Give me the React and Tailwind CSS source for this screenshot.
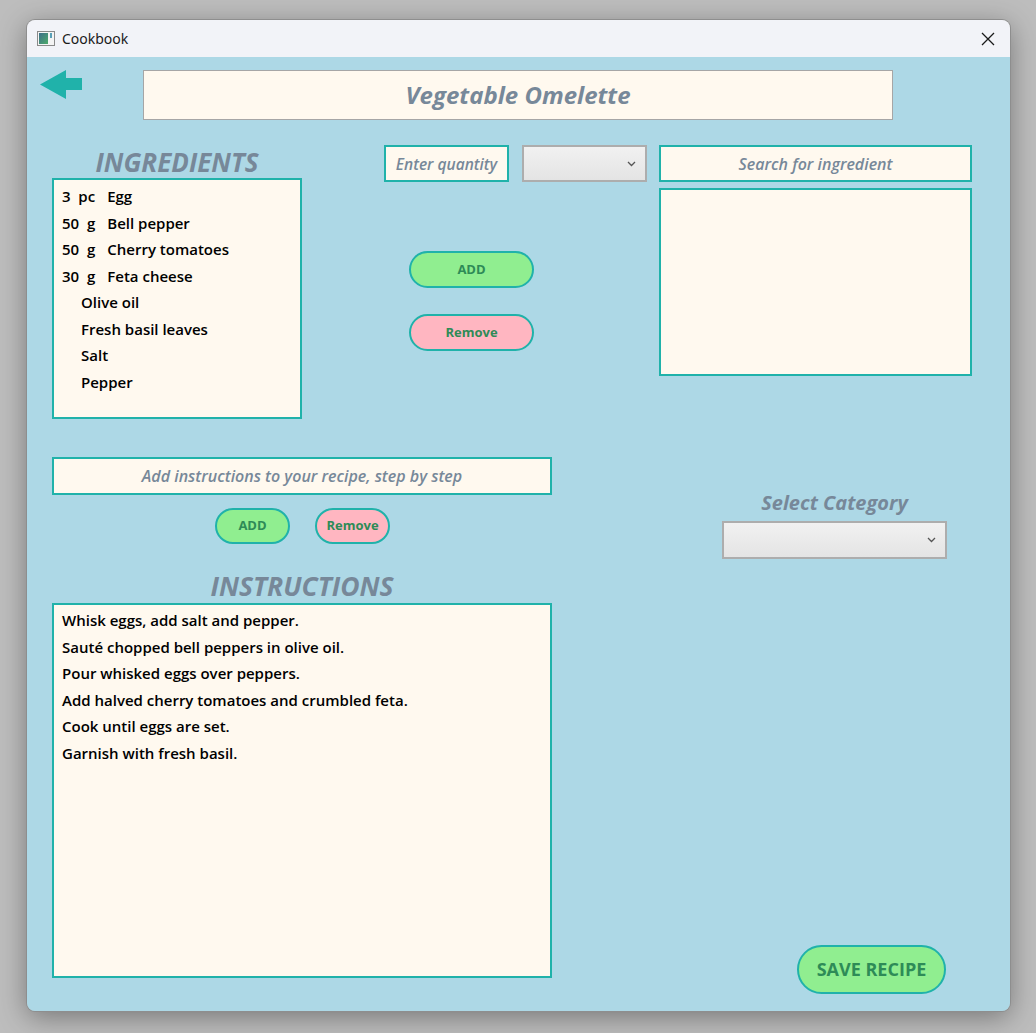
import React from "react";

const F = { fontFamily: '"Open Sans", "Noto Sans", sans-serif' };

function Combo({ className }) {
  return (
    <div
      className={`flex items-center justify-end border-2 border-[#adadad] bg-gradient-to-b from-[#f1f1f1] to-[#e4e4e4] pr-[9px] ${className}`}
    >
      <svg width="9" height="6" viewBox="0 0 9 6">
        <path d="M1 1 L4.5 4.5 L8 1" fill="none" stroke="#555" strokeWidth="1.3" />
      </svg>
    </div>
  );
}

function PillButton({ label, color, className, textClass }) {
  return (
    <div
      className={`flex items-center justify-center rounded-full border-2 border-[#20b2aa] ${color} ${className}`}
    >
      <span className={`font-bold text-[#2e8b57] ${textClass}`}>{label}</span>
    </div>
  );
}

const ingredients = [
  ["3  pc", "Egg"],
  ["50  g", "Bell pepper"],
  ["50  g", "Cherry tomatoes"],
  ["30  g", "Feta cheese"],
  ["", "Olive oil"],
  ["", "Fresh basil leaves"],
  ["", "Salt"],
  ["", "Pepper"],
];

const steps = [
  "Whisk eggs, add salt and pepper.",
  "Sauté chopped bell peppers in olive oil.",
  "Pour whisked eggs over peppers.",
  "Add halved cherry tomatoes and crumbled feta.",
  "Cook until eggs are set.",
  "Garnish with fresh basil.",
];

export default function App() {
  return (
    <div
      className="w-[1036px] h-[1033px] bg-[#bdbdbd] pt-[20px] pl-[27px] overflow-hidden"
      style={F}
    >
      <div className="w-[983px] h-[991px] rounded-[8px] overflow-hidden flex flex-col shadow-[0_0_0_1px_#8e8e8e,0_6px_28px_rgba(0,0,0,0.38)]">
        {/* Title bar */}
        <div className="h-[37px] bg-[#f2f3f8] flex items-center pl-[10px] pr-[15px]">
          <svg width="18" height="15" viewBox="0 0 18 15">
            <rect x="0.5" y="0.5" width="17" height="14" fill="#f4f4f4" stroke="#8a8a8a" />
            <defs>
              <linearGradient id="ig" x1="0" y1="0" x2="1" y2="1">
                <stop offset="0" stopColor="#3d6f8a" />
                <stop offset="1" stopColor="#4caa6a" />
              </linearGradient>
            </defs>
            <rect x="2" y="2" width="9" height="11" fill="url(#ig)" />
            <rect x="13" y="2" width="2" height="5" fill="#5aa0b8" />
          </svg>
          <span
            className="ml-[7px] text-[14px] text-[#1a1a1a]"
            style={{ fontFamily: '"Noto Sans", "Open Sans", sans-serif' }}
          >
            Cookbook
          </span>
          <div className="flex-1" />
          <svg width="14" height="14" viewBox="0 0 14 14">
            <path d="M1 1 L13 13 M13 1 L1 13" stroke="#1a1a1a" strokeWidth="1.3" />
          </svg>
        </div>

        {/* Content */}
        <div className="flex-1 bg-[#add8e6] flex flex-col">
          {/* Header row */}
          <div className="flex items-start pt-[13px]">
            <svg className="ml-[13px]" width="42" height="29" viewBox="0 0 42 29">
              <polygon points="0,14.5 26,0 26,8 42,8 42,20 26,20 26,29" fill="#20b2aa" />
            </svg>
            <div className="ml-[61px] w-[750px] h-[50px] bg-[#fff9ef] border border-[#a6a6a6] flex items-center justify-center">
              <span className="text-[24px] font-bold italic text-[#778899]">Vegetable Omelette</span>
            </div>
          </div>

          {/* Top block */}
          <div className="flex items-start mt-[25px] h-[274px]">
            {/* Ingredients */}
            <div className="ml-[25px] w-[250px] flex flex-col">
              <div className="h-[33px] flex items-center justify-center">
                <span className="text-[26px] font-bold italic text-[#778899] leading-none">
                  INGREDIENTS
                </span>
              </div>
              <div className="h-[241px] bg-[#fff9ef] border-2 border-[#20b2aa] pt-[3px] pl-[8px]">
                {ingredients.map(([q, n], i) => (
                  <div
                    key={i}
                    className="h-[26.5px] flex items-center text-[15px] font-semibold text-black whitespace-pre"
                  >
                    {q ? (
                      <>
                        <span>{q}</span>
                        <span className="ml-[12px]">{n}</span>
                      </>
                    ) : (
                      <span className="ml-[19px]">{n}</span>
                    )}
                  </div>
                ))}
              </div>
            </div>

            {/* Middle */}
            <div className="ml-[82px] flex flex-col">
              <div className="flex">
                <div className="w-[125px] h-[37px] bg-[#fff9ef] border-2 border-[#20b2aa] flex items-center justify-center pt-[2px]">
                  <span className="text-[15.5px] font-semibold italic text-[#778899]">Enter quantity</span>
                </div>
                <Combo className="ml-[13px] w-[125px] h-[37px]" />
              </div>
              <PillButton
                label="ADD"
                color="bg-[#90ee90]"
                className="ml-[25px] mt-[69px] w-[125px] h-[37px]"
                textClass="text-[13px]"
              />
              <PillButton
                label="Remove"
                color="bg-[#ffb6c1]"
                className="ml-[25px] mt-[26px] w-[125px] h-[37px]"
                textClass="text-[13px]"
              />
            </div>

            {/* Right */}
            <div className="ml-[12px] w-[313px] flex flex-col">
              <div className="h-[37px] bg-[#fff9ef] border-2 border-[#20b2aa] flex items-center justify-center pt-[1px]">
                <span className="text-[16px] font-semibold italic text-[#778899]">Search for ingredient</span>
              </div>
              <div className="mt-[6px] h-[188px] bg-[#fff9ef] border-2 border-[#20b2aa]" />
            </div>
          </div>

          {/* Bottom block */}
          <div className="flex items-start mt-[38px]">
            <div className="ml-[25px] w-[500px] flex flex-col">
              <div className="h-[38px] bg-[#fff9ef] border-2 border-[#20b2aa] flex items-center justify-center">
                <span className="text-[16px] font-semibold italic text-[#778899]">
                  Add instructions to your recipe, step by step
                </span>
              </div>
              <div className="mt-[13px] flex justify-center gap-[25px] pl-[1px]">
                <PillButton label="ADD" color="bg-[#90ee90]" className="w-[75px] h-[36px]" textClass="text-[13px]" />
                <PillButton label="Remove" color="bg-[#ffb6c1]" className="w-[75px] h-[36px]" textClass="text-[13px]" />
              </div>
              <div className="mt-[26px] h-[33px] flex items-center justify-center">
                <span className="text-[26.5px] font-bold italic text-[#778899] leading-none">
                  INSTRUCTIONS
                </span>
              </div>
              <div className="h-[375px] bg-[#fff9ef] border-2 border-[#20b2aa] pt-[2px] pl-[8px]">
                {steps.map((s, i) => (
                  <div key={i} className="h-[26.6px] flex items-center text-[15px] font-semibold text-black">
                    {s}
                  </div>
                ))}
              </div>
            </div>

            <div className="flex flex-col">
              <div className="ml-[170px] w-[225px] flex flex-col">
                <div className="mt-[34px] h-[24px] flex items-center justify-center">
                  <span className="text-[20px] font-bold italic text-[#778899]">Select Category</span>
                </div>
                <Combo className="mt-[6px] h-[38px]" />
              </div>
              <PillButton
                label="SAVE RECIPE"
                color="bg-[#90ee90]"
                className="ml-[245px] mt-[386px] w-[149px] h-[49px] rounded-[20px]"
                textClass="text-[18px]"
              />
            </div>
          </div>
        </div>
      </div>
    </div>
  );
}
